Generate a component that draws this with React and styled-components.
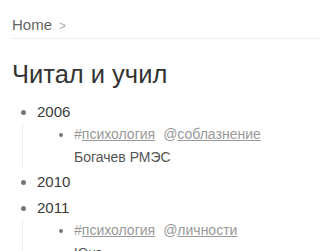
import styled, { createGlobalStyle } from "styled-components";

const GlobalStyle = createGlobalStyle`
  body {
    margin: 0;
    background: #fff;
    font-family: "Liberation Sans", Arial, sans-serif;
    color: #333;
  }
`;

const years = [
  {
    year: "2006",
    items: [{ tag: "психология", topic: "соблазнение", note: "Богачев РМЭС" }],
  },
  { year: "2010", items: [] },
  {
    year: "2011",
    items: [{ tag: "психология", topic: "личности", note: "Юнг" }],
  },
];

export default function App() {
  return (
    <>
      <GlobalStyle />
      <Page>
        <Breadcrumbs>
          <Crumb>Home</Crumb>
          <Separator>&gt;</Separator>
        </Breadcrumbs>
        <Title>Читал и учил</Title>
        <YearList>
          {years.map((entry) => (
            <YearItem key={entry.year}>
              {entry.year}
              {entry.items.length > 0 && (
                <BookList>
                  {entry.items.map((book) => (
                    <BookItem key={book.note}>
                      <Tags>
                        #<TagLink href="#">{book.tag}</TagLink>
                        <Spacer />@<TagLink href="#">{book.topic}</TagLink>
                      </Tags>
                      <Note>{book.note}</Note>
                    </BookItem>
                  ))}
                </BookList>
              )}
            </YearItem>
          ))}
        </YearList>
      </Page>
    </>
  );
}

const Page = styled.div`
  padding: 16px 0 0 12px;
`;

const Breadcrumbs = styled.nav`
  display: flex;
  align-items: baseline;
  gap: 7px;
  padding-bottom: 4px;
  border-bottom: 1px solid #eee;
`;

const Crumb = styled.span`
  font-size: 15px;
  line-height: 18px;
  color: #666;
`;

const Separator = styled.span`
  font-size: 12px;
  color: #aaa;
`;

const Title = styled.h1`
  margin: 20px 0 12px;
  font-size: 25.5px;
  line-height: 30px;
  font-weight: normal;
  color: #333;
`;

const YearList = styled.ul`
  margin: 0;
  padding: 0 0 0 25px;
  list-style: disc;
`;

const YearItem = styled.li`
  font-size: 15px;
  line-height: 22px;
  margin-bottom: 4px;
  color: #3a3a3a;

  &::marker {
    color: #777;
  }
`;

const BookList = styled.ul`
  margin: 0 0 0 -15px;
  padding: 0 0 0 51px;
  border-left: 1px solid #eee;
  list-style: disc;
`;

const BookItem = styled.li`
  font-size: 14px;

  &::marker {
    color: #777;
  }
`;

const Tags = styled.div`
  line-height: 22px;
  margin-bottom: 2px;
  color: #999;
`;

const TagLink = styled.a`
  color: #999;
  text-decoration: underline;
`;

const Spacer = styled.span`
  display: inline-block;
  width: 8px;
`;

const Note = styled.div`
  line-height: 20px;
  color: #555;
`;
